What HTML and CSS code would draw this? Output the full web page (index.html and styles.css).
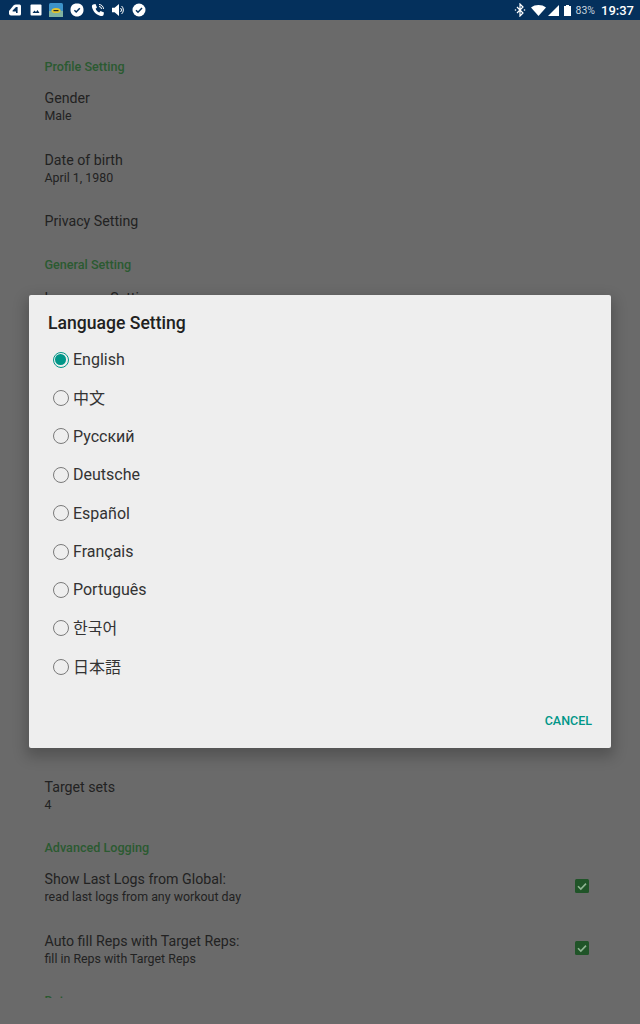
FILE: index.html
```html
<!DOCTYPE html>
<html lang="en">
<head>
<meta charset="utf-8">
<title>Language Setting</title>
<link rel="stylesheet" href="styles.css">
</head>
<body>
<div class="screen">
  <header class="statusbar">
    <div class="status-left">
      <svg class="ic" viewBox="0 0 14 14"><path fill="#fff" d="M1 8 L5.5 2.5 Q6.5 1.5 8 1.5 H11.5 Q13 1.5 13 3 V11 Q13 12.5 11.5 12.5 H3 Q1 12.5 1 10.5 Z"/><path fill="#04305c" d="M8 4 H9.6 V10 H8 V8.6 H4.6 V7.4 Z"/></svg>
      <svg class="ic" viewBox="0 0 14 14"><rect x="1.5" y="1.5" width="11" height="11" rx="1" fill="#fff"/><path fill="#04305c" d="M3.5 10 L5.5 7.5 L7 9 L8.5 7 L10.5 10 Z"/></svg>
      <svg class="ic ic-app" viewBox="0 0 14 14"><rect width="14" height="14" rx="1.5" fill="#3d93c9"/><rect y="8" width="14" height="6" fill="#7fb2a0"/><ellipse cx="7" cy="7.5" rx="4.5" ry="2.6" fill="#e3c52f"/><rect x="4.5" y="7" width="5" height="1.2" fill="#222"/></svg>
      <svg class="ic" viewBox="0 0 14 14"><path fill="#fff" d="M7 .5 C10.5 .5 13.5 2 13.5 7 C13.5 11 10.5 13.5 7 13.5 C3.5 13.5 .5 11 .5 7 C.5 3 2.5 .5 7 .5 Z"/><path fill="none" stroke="#04305c" stroke-width="1.5" d="M4.4 7.2 L6.2 9 L9.8 5.2"/></svg>
      <svg class="ic" viewBox="0 0 14 14"><path fill="#fff" d="M2 1.5 L4.5 1 L6 4.5 L4.6 5.8 C5.3 7.5 6.5 8.7 8.2 9.4 L9.5 8 L13 9.5 L12.5 12 C12 13 11 13.2 9.8 13 C5.5 12 2 8.5 1 4.2 C.8 3 1 2 2 1.5 Z"/><path fill="none" stroke="#fff" stroke-width="1" d="M8 1.5 A4.5 4.5 0 0 1 12.5 6 M8 3.5 A2.5 2.5 0 0 1 10.5 6"/></svg>
      <svg class="ic" viewBox="0 0 14 14"><path fill="#fff" d="M1 4.8 H3.6 L8 1 V13 L3.6 9.2 H1 Z"/><path fill="none" stroke="#fff" stroke-width="1" d="M9.6 5 A2.8 2.8 0 0 1 9.6 9 M10.6 3 A5.4 5.4 0 0 1 10.6 11"/></svg>
      <svg class="ic" viewBox="0 0 14 14"><circle cx="7" cy="7" r="6.5" fill="#fff"/><path fill="none" stroke="#04305c" stroke-width="1.5" d="M4 7.2 L6 9.2 L10 5"/></svg>
    </div>
    <div class="status-right">
      <svg class="ic-bt" viewBox="0 0 12 14"><path fill="none" stroke="#fff" stroke-width="1.2" d="M3 4 L9 10 L6 13 V1 L9 4 L3 10"/><circle cx="1.5" cy="7" r=".8" fill="#fff"/><circle cx="10.5" cy="7" r=".8" fill="#fff"/></svg>
      <svg class="ic-wifi" viewBox="0 0 15 11"><path fill="#fff" d="M0 2.5 C4 -.8 11 -.8 15 2.5 L7.5 11 Z"/></svg>
      <svg class="ic-signal" viewBox="0 0 11 11"><path fill="#fff" d="M11 0 V11 H0 Z"/></svg>
      <svg class="ic-batt" viewBox="0 0 7 11"><path fill="#fff" d="M2 0 H5 V1 H7 V11 H0 V1 H2 Z"/></svg>
      <span class="batt-text">83%</span>
      <span class="clock">19:37</span>
    </div>
  </header>

  <main class="settings">
    <h2 class="section first">Profile Setting</h2>
    <div class="row"><div class="title">Gender</div><div class="sub">Male</div></div>
    <div class="row"><div class="title">Date of birth</div><div class="sub">April 1, 1980</div></div>
    <div class="row single"><div class="title">Privacy Setting</div></div>
    <h2 class="section">General Setting</h2>
    <div class="row covered"><div class="title">Language Setting</div></div>
    <div class="row target"><div class="title">Target sets</div><div class="sub">4</div></div>
    <h2 class="section">Advanced Logging</h2>
    <div class="row check">
      <div><div class="title">Show Last Logs from Global:</div><div class="sub">read last logs from any workout day</div></div>
      <svg class="box" viewBox="0 0 14 14"><rect width="14" height="14" rx="1.5" fill="#205428"/><path fill="none" stroke="#8fb493" stroke-width="1.6" d="M3 7.2 L5.8 10 L11 4.6"/></svg>
    </div>
    <div class="row check">
      <div><div class="title">Auto fill Reps with Target Reps:</div><div class="sub">fill in Reps with Target Reps</div></div>
      <svg class="box" viewBox="0 0 14 14"><rect width="14" height="14" rx="1.5" fill="#205428"/><path fill="none" stroke="#8fb493" stroke-width="1.6" d="M3 7.2 L5.8 10 L11 4.6"/></svg>
    </div>
    <h2 class="section cut">Data</h2>
  </main>

  <section class="dialog">
    <h1 class="dialog-title">Language Setting</h1>
    <ul class="options">
      <li class="option selected"><span class="radio"></span>English</li>
      <li class="option"><span class="radio"></span><span class="cjk cjk-sc">中文</span></li>
      <li class="option"><span class="radio"></span>Русский</li>
      <li class="option"><span class="radio"></span>Deutsche</li>
      <li class="option"><span class="radio"></span>Español</li>
      <li class="option"><span class="radio"></span>Français</li>
      <li class="option"><span class="radio"></span>Português</li>
      <li class="option"><span class="radio"></span><span class="cjk cjk-kr">한국어</span></li>
      <li class="option"><span class="radio"></span><span class="cjk cjk-jp">日本語</span></li>
    </ul>
    <div class="actions"><span class="cancel">CANCEL</span></div>
  </section>
</div>
</body>
</html>
```
FILE: styles.css
```css
* { box-sizing: border-box; }
html, body { margin: 0; padding: 0; }
body { font-family: Roboto, "Noto Sans CJK SC", sans-serif; background: #6a6a6a; }
.screen { position: relative; width: 640px; height: 1024px; overflow: hidden; background: #6a6a6a; }

.statusbar { height: 20px; background: #04305c; display: flex; justify-content: space-between; align-items: center; padding: 0 6px 0 8px; }
.status-left { display: flex; align-items: center; gap: 6.7px; }
.ic { width: 14px; height: 14px; display: block; }
.status-right { display: flex; align-items: center; color: #fff; }
.ic-bt { width: 12px; height: 14px; margin-right: 5px; }
.ic-wifi { width: 15px; height: 11px; margin-right: 2px; }
.ic-signal { width: 11px; height: 11px; margin-right: 5px; }
.ic-batt { width: 7px; height: 11px; margin-right: 5px; }
.batt-text { font-size: 10.5px; color: #c9d4df; margin-right: 6px; }
.clock { font-size: 13px; font-weight: 500; }

.settings { height: 978px; overflow: hidden; padding: 0 50px 0 44.5px; }
.section { margin: 0; font-size: 12.6px; font-weight: 500; color: #2b5a31; line-height: 16px; padding-top: 19px; height: 35px; }
.section.first { padding-top: 39px; height: 55px; }
.section.cut { padding-top: 13px; }
.row { height: 61.5px; padding-top: 15px; }
.title { font-size: 14.2px; line-height: 17px; color: #222; }
.sub { font-size: 12.4px; line-height: 15px; color: #222; margin-top: 1px; }
.row.single { height: 40px; }
.row.covered { height: 506px; padding-top: 17px; }
.row.target { padding-top: 0; height: 42px; }
.row.check { display: flex; justify-content: space-between; align-items: center; padding-top: 0; height: 62px; }
.box { width: 14px; height: 14px; margin: 0 1px 2px 0; }

.dialog { position: absolute; left: 29px; top: 295px; width: 582px; height: 453px; background: #eeeeee; border-radius: 2px; box-shadow: 0 6px 14px 3px rgba(0,0,0,.22); padding: 18px 19px 0 19px; }
.dialog-title { margin: 0; font-size: 17.6px; font-weight: 500; line-height: 20px; color: #212121; }
.options { list-style: none; margin: 7.4px 0 0; padding: 0; }
.option { height: 38.4px; display: flex; align-items: center; font-size: 16px; color: #333; }
.radio { width: 16px; height: 16px; border: 1.8px solid #7a7a7a; border-radius: 50%; margin: 0 4.5px 0 4.5px; flex: none; position: relative; }
.selected .radio { border-color: #009688; }
.selected .radio::after { content: ""; position: absolute; inset: 1.7px; border-radius: 50%; background: #009688; }
.cjk { margin-bottom: 2px; }
.cjk-sc { font-family: "Noto Sans CJK SC", sans-serif; }
.cjk-kr { font-family: "Noto Sans CJK KR", sans-serif; }
.cjk-jp { font-family: "Noto Sans CJK JP", sans-serif; }
.actions { position: absolute; right: 19px; bottom: 19px; }
.cancel { font-size: 12.5px; font-weight: 500; color: #009688; }
```
